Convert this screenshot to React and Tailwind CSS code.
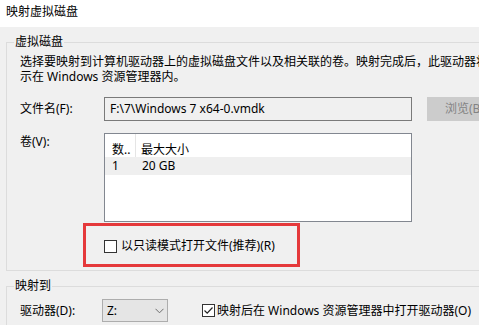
import React from "react";

export default function App() {
  return (
    <div className="w-[479px] h-[325px] overflow-hidden bg-[#f0f0f0] text-[12px] leading-[16px] text-black font-['Noto_Sans','Noto_Sans_CJK_SC',sans-serif] relative">
      <div className="h-[27px] bg-white pl-[6px] pt-[4px]">映射虚拟磁盘</div>

      <fieldset className="ml-[6px] mt-[7px] w-[560px] h-[237px] border border-[#dcdcdc] p-0 m-0">
        <legend className="ml-[7px] px-[1px] leading-[16px]">虚拟磁盘</legend>
        <div className="pl-[13px]">
          <div className="mt-[4px] leading-[15px] whitespace-nowrap">
            选择要映射到计算机驱动器上的虚拟磁盘文件以及相关联的卷。映射完成后，此驱动器将显
            <br />
            示在 Windows 资源管理器内。
          </div>

          <div className="mt-[13px] flex items-center">
            <div className="w-[84px]">文件名(F):</div>
            <div className="w-[308px] h-[24px] border border-[#7a7a7a] bg-[#f0f0f0] pl-[5px] flex items-center whitespace-nowrap">
              F:\7\Windows 7 x64-0.vmdk
            </div>
            <div className="ml-[15px] w-[75px] h-[24px] bg-[#cccccc] text-[#838383] flex items-center justify-center whitespace-nowrap">
              浏览(B)
            </div>
          </div>

          <div className="mt-[12px] flex items-start">
            <div className="w-[84px] pt-[1px]">卷(V):</div>
            <div className="w-[308px] h-[89px] border border-[#828790] bg-white">
              <div className="h-[23px] flex">
                <div className="w-[31px] pl-[7px] pt-[8px] border-r border-[#e5e5e5]">数..</div>
                <div className="pl-[5px] pt-[8px]">最大大小</div>
              </div>
              <div className="h-[18px] bg-[#efefef] flex leading-[18px]">
                <div className="w-[31px] pl-[7px]">1</div>
                <div className="pl-[6px]">20 GB</div>
              </div>
            </div>
          </div>

          <div className="mt-[16px] ml-[84px] flex items-center">
            <div className="w-[13px] h-[13px] border border-[#333333] bg-white"></div>
            <div className="ml-[4px] whitespace-nowrap">以只读模式打开文件(推荐)(R)</div>
          </div>
        </div>
      </fieldset>

      <fieldset className="ml-[6px] mt-[7px] w-[560px] h-[80px] border border-[#dcdcdc] p-0 m-0">
        <legend className="ml-[7px] px-[1px] leading-[16px]">映射到</legend>
        <div className="pl-[13px] mt-[5px] flex items-center">
          <div className="w-[82px]">驱动器(D):</div>
          <div className="w-[66px] h-[23px] bg-[#e5e5e5] border border-[#adadad] pl-[4px] pr-[3px] flex items-center justify-between">
            <span>Z:</span>
            <svg width="9" height="6" viewBox="0 0 9 6">
              <path d="M0.5 0.8 L4.5 4.8 L8.5 0.8" fill="none" stroke="#6d6d6d" strokeWidth="1" />
            </svg>
          </div>
          <div className="ml-[34px] w-[13px] h-[13px] border border-[#333333] bg-white flex items-center justify-center">
            <svg width="11" height="11" viewBox="0 0 11 11">
              <path d="M1.5 5.5 L4.2 8.2 L9.5 2.5" fill="none" stroke="#222222" strokeWidth="1.2" />
            </svg>
          </div>
          <div className="ml-[2px] whitespace-nowrap">映射后在 Windows 资源管理器中打开驱动器(O)</div>
        </div>
      </fieldset>

      <div className="absolute left-[83px] top-[223px] w-[217px] h-[44px] border-[3px] border-[#e5393b]"></div>
    </div>
  );
}
